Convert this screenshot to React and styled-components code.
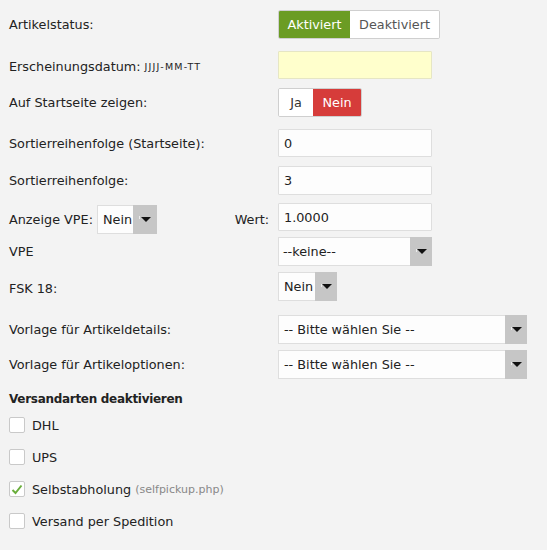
import React from "react";
import styled, { createGlobalStyle } from "styled-components";

const Global = createGlobalStyle`
  html, body { margin: 0; padding: 0; background: #f3f3f3; }
  body { font-family: "DejaVu Sans", Verdana, sans-serif; font-size: 12.8px; color: #222; }
  * { box-sizing: border-box; }
`;

const Page = styled.div`
  padding: 10px 0 0 9px;
  display: flex;
  flex-direction: column;
`;

const Row = styled.div`
  display: flex;
  align-items: center;
  height: ${(p) => p.$h || 29}px;
  margin-bottom: ${(p) => p.$mb || 0}px;
`;

const Label = styled.div`
  width: 269px;
  display: flex;
  align-items: center;
  white-space: nowrap;
  padding-top: ${(p) => p.$pt || 0}px;
`;

const Hint = styled.span`
  font-size: 9.5px;
  text-transform: uppercase;
  letter-spacing: 1.2px;
  margin-left: 4px;
  color: #222;
`;

const RightLabel = styled.span`
  margin-left: auto;
  margin-right: 9px;
`;

const Segmented = styled.div`
  display: flex;
  height: 29px;
  border: 1px solid #cfcfcf;
  border-radius: 2px;
  overflow: hidden;
  background: #fff;
`;

const Seg = styled.div`
  display: flex;
  align-items: center;
  justify-content: center;
  width: ${(p) => p.$w}px;
  background: ${(p) => p.$bg || "#fff"};
  color: ${(p) => p.$fg || "#555"};
`;

const TextInput = styled.div`
  width: ${(p) => p.$w || 154}px;
  height: ${(p) => p.$h || 29}px;
  border: 1px solid ${(p) => (p.$yellow ? "#e6e6c4" : "#dedede")};
  background: ${(p) => (p.$yellow ? "#ffffcc" : "#fdfdfd")};
  border-radius: 1px;
  padding: 0 5px;
  display: flex;
  align-items: center;
  color: #222;
`;

const SelectBox = styled.div`
  width: ${(p) => p.$w}px;
  height: ${(p) => p.$h || 29}px;
  border: 1px solid #dedede;
  border-right: none;
  background: #fdfdfd;
  display: flex;
  align-items: stretch;
  margin-left: ${(p) => p.$ml || 0}px;
`;

const SelectText = styled.div`
  flex: 1;
  display: flex;
  align-items: center;
  padding-left: ${(p) => p.$pl || 4}px;
  white-space: nowrap;
  overflow: hidden;
  color: #222;
`;

const Arrow = styled.div`
  width: ${(p) => p.$w || 22}px;
  background: #c6c6c6;
  position: relative;
  display: flex;
  align-items: center;
  justify-content: center;
  margin: -1px 0;
`;

const Tick = styled.span`
  position: absolute;
  left: 6px;
  top: 50%;
  margin-top: -3px;
  width: 1px;
  height: 3px;
  background: #ececec;
`;

const Tri = styled.span`
  width: 0;
  height: 0;
  margin-left: 2px;
  border-left: 5px solid transparent;
  border-right: 5px solid transparent;
  border-top: 5px solid #111;
`;

const Heading = styled.div`
  font-weight: bold;
  font-size: 12px;
  letter-spacing: -0.3px;
  line-height: 15px;
  margin-bottom: 2px;
`;

const CheckRow = styled.div`
  display: flex;
  align-items: center;
  height: 32px;
`;

const Box = styled.span`
  width: 16px;
  height: 16px;
  border: 1px solid #c9c9c9;
  border-radius: 2px;
  background: #fff;
  margin-right: 7px;
  display: flex;
  align-items: center;
  justify-content: center;
`;

const Muted = styled.span`
  color: #888;
  font-size: 11px;
  margin-left: 4px;
`;

function Select({ w, text, aw, ml, pl }) {
  return (
    <SelectBox $w={w} $ml={ml}>
      <SelectText $pl={pl}>{text}</SelectText>
      <Arrow $w={aw}>
        <Tick />
        <Tri />
      </Arrow>
    </SelectBox>
  );
}

function Check({ checked, children }) {
  return (
    <CheckRow>
      <Box>
        {checked && (
          <svg width="12" height="11" viewBox="0 0 12 11">
            <path d="M1.5 6 L4.5 9 L10.5 1.5" fill="none" stroke="#6aae3c" strokeWidth="2" />
          </svg>
        )}
      </Box>
      {children}
    </CheckRow>
  );
}

export default function App() {
  return (
    <>
      <Global />
      <Page>
        <Row $mb={12}>
          <Label>Artikelstatus:</Label>
          <Segmented>
            <Seg $w={71} $bg="#6b9c24" $fg="#fff">Aktiviert</Seg>
            <Seg $w={89}>Deaktiviert</Seg>
          </Segmented>
        </Row>
        <Row $h={28} $mb={9}>
          <Label $pt={3}>
            Erscheinungsdatum:<Hint>jjjj-mm-tt</Hint>
          </Label>
          <TextInput $yellow $h={28} />
        </Row>
        <Row $mb={12}>
          <Label>Auf Startseite zeigen:</Label>
          <Segmented>
            <Seg $w={34} $fg="#333">Ja</Seg>
            <Seg $w={48} $bg="#d63c3a" $fg="#fff">Nein</Seg>
          </Segmented>
        </Row>
        <Row $h={28} $mb={9}>
          <Label>Sortierreihenfolge (Startseite):</Label>
          <TextInput $h={28}>0</TextInput>
        </Row>
        <Row $mb={8}>
          <Label>Sortierreihenfolge:</Label>
          <TextInput>3</TextInput>
        </Row>
        <Row $h={28} $mb={6}>
          <Label $pt={4}>
            Anzeige VPE:
            <Select w={60} text="Nein" aw={24} ml={4} pl={5} />
            <RightLabel>Wert:</RightLabel>
          </Label>
          <TextInput $h={28}>1.0000</TextInput>
        </Row>
        <Row $mb={6}>
          <Label>VPE</Label>
          <Select w={154} text="--keine--" />
        </Row>
        <Row $mb={14}>
          <Label $pt={4}>FSK 18:</Label>
          <Select w={59} text="Nein" pl={5} />
        </Row>
        <Row $mb={6}>
          <Label>Vorlage für Artikeldetails:</Label>
          <Select w={249} text="-- Bitte wählen Sie --" pl={5} />
        </Row>
        <Row $mb={13}>
          <Label>Vorlage für Artikeloptionen:</Label>
          <Select w={249} text="-- Bitte wählen Sie --" pl={5} />
        </Row>
        <Heading>Versandarten deaktivieren</Heading>
        <Check>DHL</Check>
        <Check>UPS</Check>
        <Check checked>
          Selbstabholung<Muted>(selfpickup.php)</Muted>
        </Check>
        <Check>Versand per Spedition</Check>
      </Page>
    </>
  );
}
